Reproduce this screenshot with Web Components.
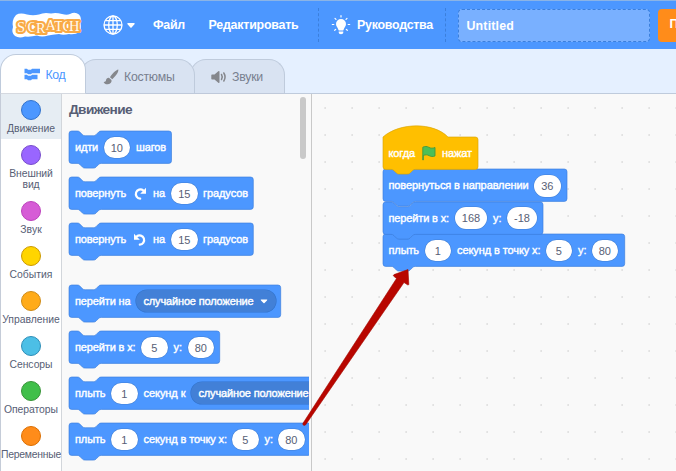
<!DOCTYPE html>
<html lang="ru"><head><meta charset="utf-8"><title>Scratch</title>
<style>body{margin:0;overflow:hidden;background:#fff;font-family:"Liberation Sans",Arial,sans-serif}</style></head>
<body><scratch-app></scratch-app>
<script>
// Text set to an exact advance width by spreading its letters.
customElements.define('fit-text', class extends HTMLElement {
  connectedCallback() {
    if (!this.shadowRoot) this.attachShadow({mode:'open'}).innerHTML =
      '<style>:host{display:inline-block;white-space:pre;flex:none}span{display:inline-block}</style><span></span>';
    const s = this.shadowRoot.querySelector('span');
    s.textContent = this.getAttribute('t');
    const w = +this.getAttribute('w');
    if (w) {
      const n = s.textContent.length, nat = s.getBoundingClientRect().width;
      s.style.letterSpacing = ((w - nat) / n).toFixed(3) + 'px';
      this.style.width = w + 'px';
    }
  }
});
const T = (t, w) => `<fit-text t="${t}" w="${w}"></fit-text>`;

const ICONS = {
  cw: '<svg width="14" height="15" viewBox="0 0 14 15"><path d="M7.2 12.6A4.6 4.6 0 1 1 10.2 4.3" fill="none" stroke="#fff" stroke-width="2.2" stroke-linecap="round"/><path d="M13 1.8V7.8H7.2Z" fill="#fff"/></svg>',
  ccw: '<svg width="14" height="15" viewBox="0 0 14 15"><path d="M6.8 12.6A4.6 4.6 0 1 0 3.8 4.3" fill="none" stroke="#fff" stroke-width="2.2" stroke-linecap="round"/><path d="M1 1.8V7.8H6.8Z" fill="#fff"/></svg>',
  flag: '<svg width="14" height="15" viewBox="0 0 14 15"><path d="M.8 1.2C3 .1 5 .2 6.8 1.3S11 2.4 13 1.5V9.9C10.8 10.9 8.8 10.6 7 9.6S3.4 8.6 1.3 9.5V14H.8Z" fill="#4cbf56" stroke="#45993d" stroke-width=".9" stroke-linejoin="round"/></svg>'
};

// A stack block: l|text|width, i|value|width, d|text|width (dropdown), g|icon|width; each followed by its left gap.
customElements.define('scratch-block', class extends HTMLElement {
  connectedCallback() {
    const W = +this.getAttribute('w'), hat = this.hasAttribute('hat');
    const H = 32.4, fill = hat ? '#ffbf00' : '#4c97ff', st = hat ? '#d9a406' : '#3a7ddb';
    const notch = `c1.35 0 2.03.34 2.7 1.01l2.7 2.7c.68.68 1.35 1.01 2.7 1.01h8.1c1.35 0 2.03-.33 2.7-1.01l2.7-2.7c.68-.67 1.35-1.01 2.7-1.01`;
    const top = hat ? `M0 0C16.9-14.85 50.6-14.85 65 0H${W-2.7}a2.7 2.7 0 0 1 2.7 2.7`
      : `M0 2.7A2.7 2.7 0 0 1 2.7 0H8.1${notch}H${W-2.7}a2.7 2.7 0 0 1 2.7 2.7`;
    const bot = `V${H-2.7}a2.7 2.7 0 0 1-2.7 2.7H32.4c-1.35 0-2.02.34-2.7 1.01l-2.7 2.7c-.67.68-1.35 1.01-2.7 1.01h-8.1c-1.35 0-2.02-.33-2.7-1.01l-2.7-2.7c-.68-.67-1.35-1.01-2.7-1.01H2.7A2.7 2.7 0 0 1 0 ${H-2.7}Z`;
    const parts = this.getAttribute('parts').split(';').map(p => {
      const [k, v, w, gap] = p.split('|'), m = `margin-left:${gap}px;`;
      if (k === 'l') return `<span class="l" style="${m}">${T(v, w)}</span>`;
      if (k === 'i') return `<span class="i" style="${m}width:${w}px">${v}</span>`;
      if (k === 'g') return `<span class="g" style="${m}width:${w}px">${ICONS[v]}</span>`;
      return `<span class="d" style="${m}width:${w}px">${T(v, 110)}<svg width="8" height="5" viewBox="0 0 8 5"><path d="M1 .5H7Q7.6 .8 7 1.4L4.5 3.9Q4 4.4 3.5 3.9L1 1.4Q.4 .8 1 .5Z" fill="#fff"/></svg></span>`;
    }).join('');
    this.attachShadow({mode:'open'}).innerHTML = `<style>
      :host{display:grid;flex:none;width:${W}px;height:${H}px;color:#fff;font-size:11px;-webkit-text-stroke:.4px #fff}
      svg.b{grid-area:1/1;overflow:visible;width:${W}px;height:${H}px}
      .r{grid-area:1/1;z-index:1;display:flex;align-items:center;height:33px;white-space:nowrap}
      .r>*{flex:none;box-sizing:border-box}
      .i{height:21.6px;border-radius:11px;background:#fff;box-shadow:0 0 0 .5px #4280d7;color:#575e75;-webkit-text-stroke:0;font-size:11px;text-align:center;line-height:22px}
      .d{height:22px;border-radius:11px;background:#4280d7;box-shadow:0 0 0 .6px #3373cc;display:flex;align-items:center;padding-left:8px;gap:6px}
      .g{display:flex}.l,.d{line-height:13px}
    </style><svg class="b"><path d="${top}${bot}" fill="${fill}" stroke="${st}" stroke-width=".65"/></svg><div class="r">${parts}</div>`;
  }
});

customElements.define('block-category', class extends HTMLElement {
  connectedCallback() {
    const a = n => this.getAttribute(n);
    const rows = a('t').split('|').map((t, i) => `<div>${T(t, a('w').split('|')[i])}</div>`).join('');
    this.attachShadow({mode:'open'}).innerHTML = `<style>
      :host{display:flex;flex-direction:column;align-items:center;flex:none;box-sizing:border-box;height:${a('h')}px;padding-top:6px;overflow:hidden;color:#575e75;font-size:10.4px;line-height:11px;background:${this.hasAttribute('on')?'#e6edf3':'#fff'}}
      i{flex:none;box-sizing:border-box;width:20px;height:20px;border-radius:50%;background:${a('c')};border:1px solid ${a('s')};margin-bottom:2.500px}
      div{height:11px}
    </style><i></i>${rows}`;
  }
});

customElements.define('menu-bar', class extends HTMLElement {
  connectedCallback() {
    this.attachShadow({mode:'open'}).innerHTML = `<style>
      :host{display:flex;align-items:center;height:49px;box-sizing:border-box;border-top:1px solid #8bb4e6;background:#4c97ff;color:#fff;font-weight:700;font-size:12.400px;line-height:16px;overflow:hidden}
      :host>*{flex:none}
      .sep{width:0;height:34px;border-left:1px dashed #3b7fdc}
      .in{box-sizing:border-box;width:192px;height:33px;border:1px dashed #3b7fdc;border-radius:4px;background:#79b0ff;padding:8px 0 0 8px;margin-left:11.500px}
      .share{box-sizing:border-box;width:80px;height:33px;border-radius:4px;background:#ff8c1a;margin-left:8px;padding:7px 0 0 12px}
    </style>
    <svg width="70" height="28" viewBox="0 0 70 28" style="margin:1px 0 0 12px;overflow:visible">
      <path d="M4 3Q8 .5 15 2.500Q21 4 27 2.500Q32 0 39 1.500Q44 .5 50 2Q55 3.500 58 2Q63-.5 67 2.500Q70 6 68.500 11Q69.500 17 67.500 20Q63 23 57 22Q51 23.500 47 22Q40 22.500 36 23.500Q30 25.500 25 23.500Q19 25 13 24.500Q7 26.500 3 24Q-1 21 1 15Q-.5 8 4 3Z" fill="#fff"/>
      <text x="5 15.500 24 33.500 42.300 50.500 57" y="20 19.500 20.500 18 18.500 19 18.500" font-family="Liberation Serif,serif" font-size="14.500" fill="#fffaf0" stroke="#f9aa45" stroke-width="4.200" stroke-linejoin="round" paint-order="stroke" font-weight="400">SCRATCH</text>
    </svg>
    <svg width="20" height="20" viewBox="0 0 20 20" style="margin-left:21px" fill="none" stroke="#fff" stroke-width="1.3"><circle cx="10" cy="10" r="9"/><ellipse cx="10" cy="10" rx="4.3" ry="9"/><path d="M10 1V19M1 10H19M2.6 5.6H17.4M2.6 14.4H17.4"/></svg>
    <svg width="8" height="5" viewBox="0 0 8 5" style="margin-left:4px"><path d="M.9 0H7.1Q8.2.2 7.4 1.2L4.6 4.4Q4 5 3.4 4.4L.6 1.2Q-.2.2.9 0Z" fill="#fff"/></svg>
    <span style="margin-left:18px">${T('Файл',32)}</span>
    <span style="margin-left:23.500px">${T('Редактировать',90)}</span>
    <span class="sep" style="margin-left:19px"></span>
    <svg width="20" height="20" viewBox="0 0 20 20" style="margin-left:12.500px"><path d="M10 4a5 5 0 0 0-5 5c0 2.4 2 3.8 2.5 5.9.1.5.4.7.9.7h3.2c.5 0 .8-.2.9-.7C13 12.800 15 11.400 15 9a5 5 0 0 0-5-5ZM7.700 16.500h4.600v.8c0 1-.9 2-2.300 2s-2.300-1-2.300-2Z" fill="#fff"/><path d="M10 .7V2M4 3.300l1 1M16 3.300l-1 1M1.300 9.500H2.800M18.700 9.500H17.200M3.700 15.300l1-.9M16.300 15.300l-1-.9" stroke="#fff" stroke-width="1.200" stroke-linecap="round"/></svg>
    <span style="margin-left:6px">${T('Руководства',76)}</span>
    <span class="sep" style="margin-left:12px"></span>
    <div class="in">${T('Untitled',47.500)}</div><div class="share">Поделиться</div>`;
  }
});

customElements.define('editor-tab', class extends HTMLElement {
  connectedCallback() {
    const on = this.hasAttribute('on');
    this.attachShadow({mode:'open'}).innerHTML = `<style>
      :host{display:flex;align-items:center;flex:none;box-sizing:border-box;border:1px solid #bfcbdc;border-bottom:1px solid ${on?'#d5d9e0':'#bfc9da'};border-radius:16px 16px 0 0;background:${on?'#fff':'#d9e3f2'};color:${on?'#4c97ff':'#787f8f'};font-size:12.300px;line-height:16px}
    </style><slot></slot>`;
  }
});

customElements.define('scratch-app', class extends HTMLElement {
  connectedCallback() {
    this.attachShadow({mode:'open'}).innerHTML = `<style>
      :host{display:flex;flex-direction:column;position:relative;width:676px;height:471px;overflow:hidden}
      menu-bar{flex:none}
      .tabs{display:flex;align-items:flex-end;height:45px;box-sizing:border-box;background:#e5f0ff;box-shadow:inset 0 -1px #bfcbdc;flex:none}
      .main{display:flex;height:377px;flex:none}
      .cats{box-sizing:border-box;width:62px;border-left:1px solid #c5ccd8;border-right:1px solid #d2d6db;background:#fff;display:flex;flex-direction:column;overflow:hidden}
      .fly{width:249px;background:#f9f9f9;border-right:1px solid #c9c9c9;box-sizing:content-box;display:flex}
      .list{width:240px;padding-left:7px;overflow:hidden;display:flex;flex-direction:column;gap:13.600px}
      h2{margin:8px 0 -.6px;font-size:13.700px;line-height:16px;height:16px;color:#575e75}
      .bar{width:6px;height:62px;border-radius:3px;background:#c9c9c9;margin:3px 0 0 -9px}
      .ws{flex:1;background:#f9f9f9 radial-gradient(circle at 13.200px 14px,#e2e2e2 0,#e2e2e2 .7px,transparent 1.200px) 0 0/27px 27px}
      .script{display:flex;flex-direction:column;align-items:flex-start;padding:43px 0 0 71px}
      .script>*{position:relative}
      .arrow{position:absolute;left:0;top:0;pointer-events:none}
    </style>
    <menu-bar></menu-bar>
    <div class="tabs">
      <editor-tab on style="width:86px;height:40px;z-index:2;padding:1px 0 0 22.500px;gap:5px"><svg width="17" height="13" viewBox="0 0 17 13"><path d="M.5.8H3L4 1.800H7L8 .8H16V5.300H8L7 6.300H4L3 5.300H.5ZM.5 6.800H3L4 7.800H7L8 6.800H13.500V11.300H8L7 12.300H4L3 11.300H.5Z" fill="#4c97ff"/></svg>${T('Код',20)}</editor-tab>
      <editor-tab style="width:115px;height:35px;margin-left:-6px;z-index:1;padding-left:21.500px;gap:5.500px"><svg width="16" height="16" viewBox="0 0 16 16" fill="#85878c"><path d="M15.300.6C13 1.200 8.800 5 7 8.200L9.300 10.300C12.500 7.500 15.800 3 15.300.6ZM6.200 8.900C4.400 8.700 3.200 9.700 3 11.300 2.900 12.500 2 13 .6 12.900 1.400 14.800 3 15.600 5 15.300 7.500 15 9 13.300 8.500 11.100Z"/></svg>${T('Костюмы',50.500)}</editor-tab>
      <editor-tab style="width:95px;height:35px;margin-left:-5px;padding-left:20px;gap:4px"><svg width="17" height="14" viewBox="0 0 17 14"><path d="M1 4.500H3.500L7.300 1.200Q8.500.6 8.500 1.800V12.200Q8.500 13.400 7.300 12.800L3.500 9.500H1Q.3 9.500.3 8.700V5.300Q.3 4.500 1 4.500Z" fill="#85878c"/><path d="M10.500 4.500Q12 7 10.500 9.500M12.800 3Q15.300 7 12.800 11" fill="none" stroke="#85878c" stroke-width="1.500" stroke-linecap="round"/></svg>${T('Звуки',31)}</editor-tab>
    </div>
    <div class="main">
      <div class="cats">
        <block-category on h="45" c="#4c97ff" s="#3373cc" t="Движение" w="48"></block-category>
        <block-category h="56" c="#9966ff" s="#774dcb" t="Внешний|вид" w="43.500|17"></block-category>
        <block-category h="45" c="#d65cd6" s="#bd42bd" t="Звук" w="21.500"></block-category>
        <block-category h="45" c="#ffd500" s="#cc9900" t="События" w="43"></block-category>
        <block-category h="45" c="#ffab19" s="#cf8b17" t="Управление" w="57.500"></block-category>
        <block-category h="45" c="#4cbfe6" s="#2e8eb8" t="Сенсоры" w="43"></block-category>
        <block-category h="45" c="#40bf4a" s="#389438" t="Операторы" w="54"></block-category>
        <block-category h="52" c="#ff8c1a" s="#db6e00" t="Переменные" w="60"></block-category>
      </div>
      <div class="fly"><div class="list">
        <h2>${T('Движение',63)}</h2>
        <scratch-block w="102.500" parts="l|идти|23|6;i|10|26.500|5.500;l|шагов|30|6"></scratch-block>
        <scratch-block w="184.300" parts="l|повернуть|51|6;g|cw|14|7;l|на|12|6;i|15|26.500|6;l|градусов|45|5.500"></scratch-block>
        <scratch-block w="184.300" parts="l|повернуть|51|6;g|ccw|14|7;l|на|12|6;i|15|26.500|6;l|градусов|45|5.500"></scratch-block>
        <scratch-block style="margin-top:16px" w="211.700" parts="l|перейти на|55.500|6;d|случайное положение|140|5"></scratch-block>
        <scratch-block w="150.700" parts="l|перейти в x:|60.500|6;i|5|26.500|5.500;l|y:|8.500|6;i|80|26.500|5.500"></scratch-block>
        <scratch-block w="266" parts="l|плыть|30.500|6;i|1|26.500|5.500;l|секунд к|42|6;d|случайное положение|140|5"></scratch-block>
        <scratch-block w="241.700" parts="l|плыть|30.500|6;i|1|26.500|5.500;l|секунд в точку x:|83.500|6;i|5|26.500|5;l|y:|8.500|6;i|80|26.500|5"></scratch-block>
      </div><div class="bar"></div></div>
      <div class="ws"><div class="script">
        <scratch-block style="z-index:4" hat w="95" parts="l|когда|26.500|5.500;g|flag|14|7;l|нажат|30|6"></scratch-block>
        <scratch-block style="z-index:3" w="184" parts="l|повернуться в направлении|140|5.500;i|36|26.500|5.500"></scratch-block>
        <scratch-block style="z-index:2" w="160" parts="l|перейти в x:|60.500|5.500;i|168|32|6;l|y:|8.500|6;i|-18|30|5.500"></scratch-block>
        <scratch-block w="241.700" parts="l|плыть|30.500|5.500;i|1|26.500|5.500;l|секунд в точку x:|83.500|6;i|5|26.500|5;l|y:|8.500|6;i|80|26.500|5"></scratch-block>
      </div></div>
    </div>
    <svg class="arrow" width="676" height="471"><path d="M302.800 423.500L396.500 278.500 393.500 276Q393 275.200 394 274.600L408 269.500 408.800 284.300Q408.500 285.500 407.500 284.800L404 282.500 305.500 425Q303 426.300 302.800 423.500Z" fill="#b80600" stroke="#a30800" stroke-width=".6"/></svg>`;
  }
});
</script></body></html>
